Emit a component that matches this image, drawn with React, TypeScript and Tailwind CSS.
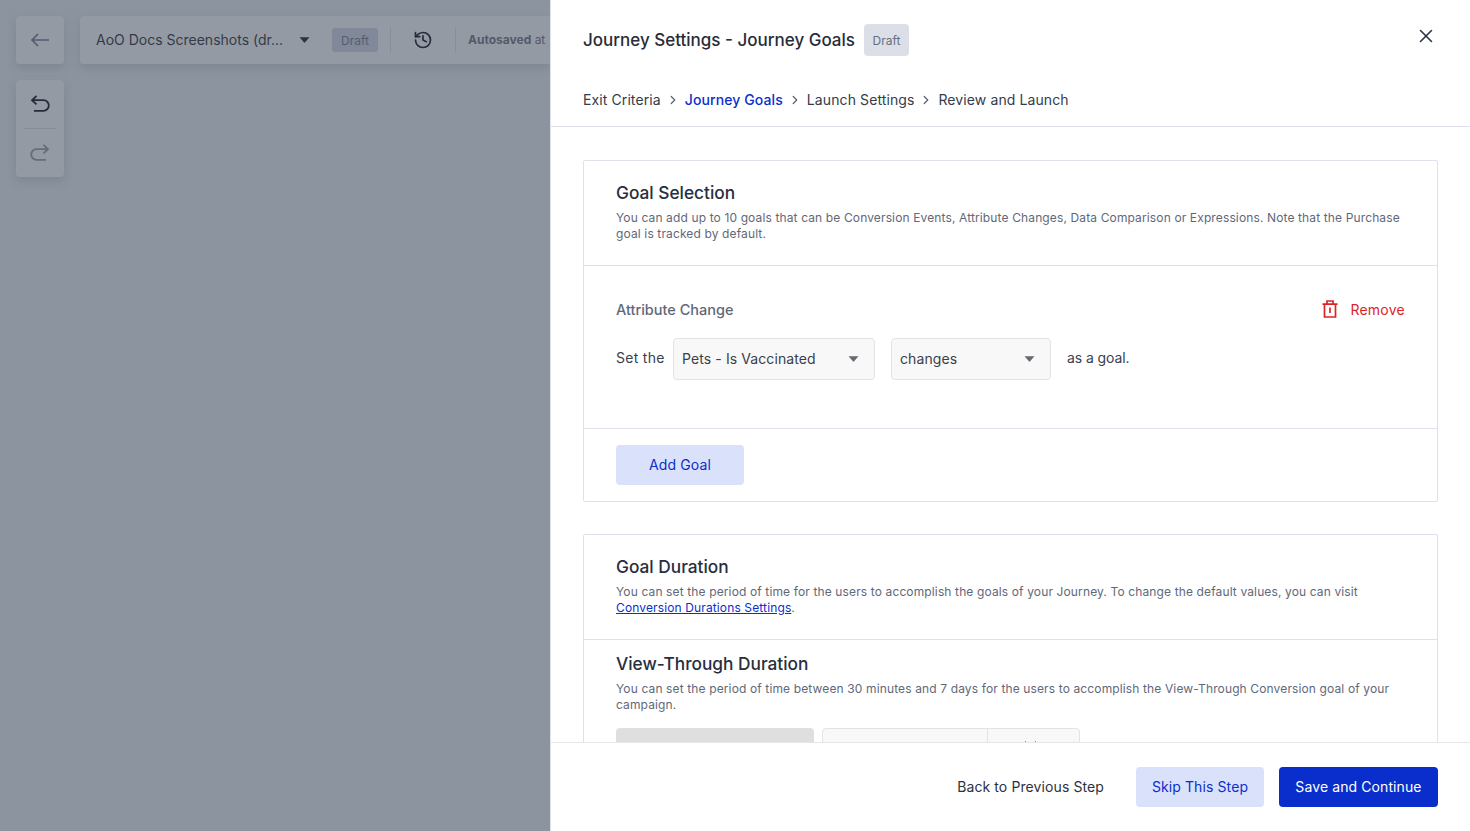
import React from "react";
import { ChevronRight, History, X } from "lucide-react";

const font = "font-['Inter','Noto_Sans',sans-serif]";

// ==========================
//      ICONS
// ==========================
const Caret = ({ className }: { className: string }) => (
  <svg width="11" height="6" viewBox="0 0 11 6" className={className}>
    <path d="M0.5 0.3h10L6.1 5.3a.8.8 0 0 1-1.2 0z" fill="currentColor" />
  </svg>
);

const BackArrow = () => (
  <svg width="20" height="16" viewBox="0 0 20 16" fill="none" stroke="currentColor" strokeWidth="1.6">
    <path d="M19 8H2M8 2 2 8l6 6" />
  </svg>
);

const UndoIcon = () => (
  <svg width="20" height="18" viewBox="0 0 20 18" fill="none" stroke="currentColor" strokeWidth="1.8">
    <path d="M6.5 1 2 5.2l4.5 4.2M2 5.2h11.5a5 5 0 0 1 0 10.6H4" />
  </svg>
);

const RedoIcon = () => (
  <svg width="20" height="18" viewBox="0 0 20 18" fill="none" stroke="currentColor" strokeWidth="1.8">
    <path d="M13.5 1 18 5.2l-4.5 4.2M18 5.2H6.5a5 5 0 0 0 0 10.6H16" />
  </svg>
);

const TrashIcon = () => (
  <svg width="16" height="18" viewBox="0 0 16 18" fill="none" stroke="currentColor" strokeWidth="1.7">
    <path d="M0.5 4.2h15M2.5 4.2V17h11V4.2M5 4.2V1h6v3.2M8 7.5v5.5" />
  </svg>
);

// ==========================
//      DIMMED CANVAS
// ==========================
const Canvas = () => (
  <div className="w-[550px] h-full shrink-0 bg-[#8c949f] overflow-hidden pl-4 pt-4 flex flex-col gap-4">
    <div className="flex gap-4">
      <div className="w-12 h-12 shrink-0 rounded bg-[#949aa4] shadow-[0_4px_10px_rgba(70,80,95,0.2)] flex items-center justify-center text-[#525c6e]">
        <BackArrow />
      </div>
      <div className="h-12 flex-1 min-w-0 overflow-hidden rounded-l bg-[#949aa4] shadow-[0_4px_10px_rgba(70,80,95,0.2)] flex items-center pl-4">
        <span className="text-[14px] text-[#333a48] w-[190px] pb-[2px] whitespace-nowrap">AoO Docs Screenshots (dr...</span>
        <Caret className="text-[#2a3140] ml-[13px]" />
        <span className="ml-[22px] w-[46px] h-6 pt-px rounded-[3px] bg-[#80889a] text-[#565e6e] text-[12px] flex items-center justify-center">Draft</span>
        <span className="ml-3 w-px h-6 bg-[#868d99]" />
        <History size={20} strokeWidth={2} className="text-[#262d3a] ml-[22px]" />
        <span className="ml-[22px] w-px h-6 bg-[#868d99]" />
        <span className="ml-3 text-[12px] text-[#525a6a] whitespace-nowrap"><b className="font-bold">Autosaved</b> at</span>
      </div>
    </div>
    <div className="w-12 h-[97px] rounded bg-[#949aa4] shadow-[0_4px_10px_rgba(70,80,95,0.2)] flex flex-col items-center">
      <div className="h-12 flex items-center justify-center text-[#262d3a]">
        <UndoIcon />
      </div>
      <div className="w-8 h-px bg-[#858c99]" />
      <div className="h-12 flex items-center justify-center text-[#666c78]">
        <RedoIcon />
      </div>
    </div>
  </div>
);

// ==========================
//      SMALL PIECES
// ==========================
const Crumb = ({ label, active }: { label: string; active?: boolean }) => (
  <span className={active ? "text-[#0a2fcc] font-medium" : "text-[#343c4c]"}>{label}</span>
);

const Select = ({ label, width }: { label: string; width: string }) => (
  <div className={`${width} h-[42px] rounded border border-[#e2e3e6] bg-[#f8f8f8] flex items-center justify-between pl-2 pr-[15px] text-[14px] tracking-[0.1px] text-[#3a3f4a]`}>
    <span className="pb-[2px]">{label}</span>
    <Caret className="text-[#666a70]" />
  </div>
);

const SectionHead = ({ title, children }: { title: string; children: React.ReactNode }) => (
  <>
    <h3 className="text-[17.3px] leading-[24px] font-medium text-[#272e3e]">{title}</h3>
    <p className="mt-[5px] text-[12px] leading-4 tracking-[0.13px] text-[#5f687a]">{children}</p>
  </>
);

const Sep = () => <ChevronRight size={14} strokeWidth={2.25} className="mx-[5px] text-[#5d6678]" />;

// ==========================
//      DRAWER
// ==========================
const Drawer = () => (
  <div className="flex-1 h-full bg-white border-l border-[#dfe2ea] flex flex-col min-w-0">
    <header className="h-[127px] shrink-0 border-b border-[#dfe2ea] px-8 relative">
      <div className="flex items-center pt-6 h-[56px]">
        <h2 className="text-[17px] font-medium text-[#272c38] leading-8">Journey Settings - Journey Goals</h2>
        <span className="ml-[9px] w-[45px] h-8 pt-px rounded bg-[#dcdfe8] text-[12px] text-[#666f84] flex items-center justify-center">Draft</span>
      </div>
      <X size={22} strokeWidth={1.75} className="absolute right-[33px] top-[25px] text-[#2f3746]" />
      <nav className="mt-[34px] flex items-center text-[14px] leading-5 tracking-[0.1px]">
        <Crumb label="Exit Criteria" />
        <Sep />
        <Crumb label="Journey Goals" active />
        <Sep />
        <Crumb label="Launch Settings" />
        <Sep />
        <Crumb label="Review and Launch" />
      </nav>
    </header>

    <main className="flex-1 min-h-0 overflow-hidden px-8 pt-[33px]">
      <section className="border border-[#dfe2ea] rounded-[2px]">
        <div className="h-[105px] border-b border-[#dfe2ea] px-8 pt-5">
          <SectionHead title="Goal Selection">
            You can add up to 10 goals that can be Conversion Events, Attribute Changes, Data Comparison or Expressions. Note that the Purchase goal is tracked by default.
          </SectionHead>
        </div>
        <div className="h-[163px] border-b border-[#dfe2ea] px-8 pt-[33px]">
          <div className="flex items-center justify-between h-5">
            <span className="text-[14.5px] pt-px font-medium text-[#5f687a]">Attribute Change</span>
            <span className="flex items-center text-[14px] tracking-[0.25px] text-[#dc2428]">
              <span className="mr-3"><TrashIcon /></span>
              Remove
            </span>
          </div>
          <div className="mt-[19px] flex items-center text-[14px] text-[#3a4150]">
            <span className="w-[49px] mr-2 pb-1 tracking-[0.3px] whitespace-nowrap">Set the</span>
            <Select label="Pets - Is Vaccinated" width="w-[202px]" />
            <span className="w-4" />
            <Select label="changes" width="w-[160px]" />
            <span className="ml-4 pb-1 tracking-[-0.1px]">as a goal.</span>
          </div>
        </div>
        <div className="px-8 py-4">
          <button className="w-32 h-10 pb-[2px] rounded bg-[#dae1fa] text-[14px] tracking-[0.15px] text-[#0a2fcc]">Add Goal</button>
        </div>
      </section>

      <section className="mt-8 border border-[#dfe2ea] rounded-[2px]">
        <div className="h-[105px] border-b border-[#dfe2ea] px-8 pt-5">
          <SectionHead title="Goal Duration">
            You can set the period of time for the users to accomplish the goals of your Journey. To change the default values, you can visit{" "}
            <a className="text-[#0a2fcc] underline">Conversion Durations Settings</a>.
          </SectionHead>
        </div>
        <div className="px-8 pt-3">
          <SectionHead title="View-Through Duration">
            You can set the period of time between 30 minutes and 7 days for the users to accomplish the View-Through Conversion goal of your campaign.
          </SectionHead>
          <div className="mt-[15px] flex gap-2">
            <div className="w-[198px] h-10 rounded bg-[#dfdfdf]" />
            <div className="w-[258px] h-10 rounded border border-[#e2e3e6] bg-[#f8f8f8] flex">
              <div className="w-[165px] border-r border-[#e2e3e6]" />
              <div className="pl-[37px] pt-3 flex gap-[9px]">
                <span className="w-px h-px bg-[#8a8a8a]" />
                <span className="w-px h-px bg-[#8a8a8a]" />
              </div>
            </div>
          </div>
        </div>
      </section>
    </main>

    <footer className="h-[89px] shrink-0 border-t border-[#e6e6e8] bg-white px-8 flex items-center justify-end text-[14px] tracking-[0.1px]">
      <span className="text-[#2c3240] mr-8 pb-[2px]">Back to Previous Step</span>
      <button className="w-[128px] h-10 pb-[2px] rounded bg-[#dae1fa] text-[#0a2fcc]">Skip This Step</button>
      <button className="w-[159px] h-10 pb-[2px] ml-[15px] rounded bg-[#0a2ecb] text-white">Save and Continue</button>
    </footer>
  </div>
);

export default function App() {
  return (
    <div className={`${font} w-full h-[831px] flex overflow-hidden`}>
      <Canvas />
      <Drawer />
    </div>
  );
}
